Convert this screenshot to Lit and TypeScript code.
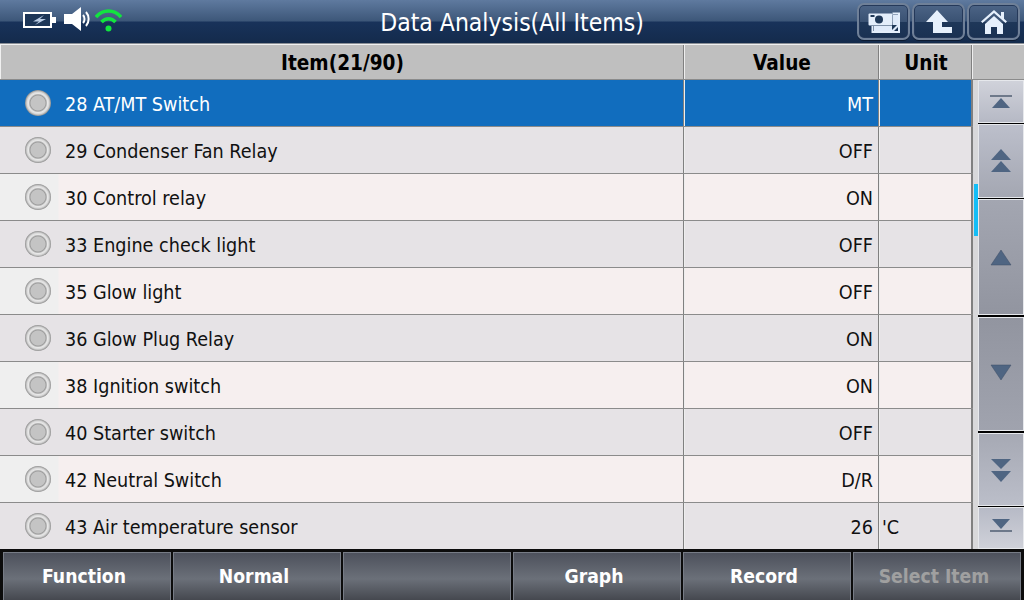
import { LitElement, html, css, svg } from "lit";
import { customElement } from "lit/decorators.js";

const rows: [string, string, string][] = [
  ["28 AT/MT Switch", "MT", ""],
  ["29 Condenser Fan Relay", "OFF", ""],
  ["30 Control relay", "ON", ""],
  ["33 Engine check light", "OFF", ""],
  ["35 Glow light", "OFF", ""],
  ["36 Glow Plug Relay", "ON", ""],
  ["38 Ignition switch", "ON", ""],
  ["40 Starter switch", "OFF", ""],
  ["42 Neutral Switch", "D/R", ""],
  ["43 Air temperature sensor", "26", "'C"],
];

const up = (y: number) => svg`<polygon points="10,${y} 20,${y - 15} 30,${y}" fill="#4f6582" stroke="#3e4f66" stroke-width=".5"/>`;
const down = (y: number) => svg`<polygon points="10,${y} 30,${y} 20,${y + 15}" fill="#4f6582" stroke="#3e4f66" stroke-width=".5"/>`;

const scrollBtns = [
  { cls: "b1", icon: svg`<line x1="9" x2="31" y1="9" y2="9" stroke="#33435a" stroke-width="1.2"/><polygon points="11,21 20,11 29,21" fill="#4f6582"/>` },
  { cls: "b2", icon: svg`<polygon points="10,14 20,3 30,14" fill="#4f6582"/><polygon points="10,26 20,15 30,26" fill="#4f6582"/>` },
  { cls: "b3", icon: up(23) },
  { cls: "b4", icon: down(6) },
  { cls: "b5", icon: svg`<polygon points="10,4 30,4 20,14" fill="#4f6582"/><polygon points="10,16 30,16 20,27" fill="#4f6582"/>` },
  { cls: "b6", icon: svg`<polygon points="11,6 29,6 20,16" fill="#4f6582"/><line x1="9" x2="31" y1="18" y2="18" stroke="#33435a" stroke-width="1.2"/>` },
];

@customElement("app-root")
export class AppRoot extends LitElement {
  static styles = css`
    :host { display: block; width: 1024px; height: 600px; overflow: hidden; font-family: "DejaVu Sans", Verdana, sans-serif; font-stretch: condensed; }
    .top { height: 44px; box-sizing: border-box; display: grid; grid-template-columns: 1fr auto; position: relative;
      background: linear-gradient(#5f7a9f 0, #3d5779 21px, #18325a 22px, #142b4c 43px); border-bottom: 1px solid #8a8f96; }
    .status { position: absolute; left: 23px; top: 7px; display: flex; align-items: flex-start; }
    .status svg { display: block; }
    .title { position: absolute; left: 0; width: 1024px; top: 8px; text-align: center; color: #fff; font-size: 24.5px; line-height: 30px; }
    .nav { grid-column: 2; display: flex; gap: 2px; padding: 3px 4px 0 0; }
    .nav-btn { width: 53px; height: 37px; box-sizing: border-box; border: 2px solid #6f8098; border-radius: 7px; display: flex; align-items: center; justify-content: center;
      background: linear-gradient(#4c6486 0, #3a5273 50%, #1e3759 52%, #1a3152 100%); box-shadow: inset 0 0 0 1px #25395a, 0 1px 0 #0c1a30; }
    .main { display: grid; grid-template-columns: 973px 51px; height: 469px; background: #d8d8da; }
    .table { display: flex; flex-direction: column; }
    .row { display: grid; grid-template-columns: 685px 195px 93px; height: 47px; box-sizing: border-box; border-bottom: 1px solid #8b8b8b; font-size: 19.600px; color: #111; }
    .row > div { border-right: 1px solid #eeeeee; box-shadow: inset -1px 0 0 #808080; box-sizing: border-box; display: flex; align-items: center; }
    .row > div:last-child { border-right-color: #808080; }
    .row.odd { background: #e6e3e6; }
    .row.even { background: #f6efef; }
    .row.sel { background: #116dbe; color: #fff; }
    .row.even .item { background: linear-gradient(90deg, #efefef 58px, #f6efef 59px); }
    .row:last-child { height: 46px; border-bottom: 0; }
    .item { padding-left: 25px; gap: 14px; }
    .label { padding-top: 2px; }
    .val { justify-content: flex-end; padding: 2px 6px 0 0; }
    .unit { padding: 2px 0 0 2px; }
    .led { width: 26px; height: 26px; flex: none; box-sizing: border-box; border-radius: 50%;
      background: radial-gradient(circle at 50% 50%, #c4c4c4 0 7px, #9c9c9c 8px, #e8e8e8 9.500px, #d8d8d8 11px, #8e8e8e 13px); }
    .head { display: grid; grid-template-columns: 685px 195px 93px 51px; height: 36px; box-sizing: border-box; background: #bfbfbf; border-top: 1px solid #f0f0f0; border-bottom: 1px solid #8b8b8b; font-size: 20.600px; font-weight: 700; color: #000; }
    .head > div { display: flex; align-items: center; justify-content: center; padding-top: 2px; border-right: 1px solid #eeeeee; box-shadow: inset -1px 0 0 #808080; box-sizing: border-box; }
    .head > div:last-child { border: 0; box-shadow: none; }
    .head .first { border-left: 1px solid #f0f0f0; }
    .side { display: grid; grid-template-columns: 5px 46px; }
    .track { position: relative; }
    .thumb { position: absolute; left: 1px; top: 104px; width: 4px; height: 52px; background: #14bdf6; }
    .btns { display: flex; flex-direction: column; background: #000; }
    .sb { box-sizing: border-box; border: 1px solid #e6e8ec; display: flex; align-items: center; justify-content: center; }
    .sb svg { display: block; }
    .b1 { height: 43px; margin-bottom: 1px; background: linear-gradient(#d0d2da, #b6b9c5); }
    .b2 { height: 74px; margin-bottom: 1px; background: linear-gradient(#bcbfcb, #a4a7b2); }
    .b3 { height: 116px; margin-bottom: 2px; background: linear-gradient(#a3a6b1, #9295a0); }
    .b4 { height: 114px; margin-bottom: 2px; background: linear-gradient(#9295a0, #a0a3ae); }
    .b5 { height: 73px; margin-bottom: 1px; background: linear-gradient(#a6a9b4, #bbbec9); }
    .b6 { height: 42px; background: linear-gradient(#b7bac6, #cfd1d9); }
    .foot { height: 51px; box-sizing: border-box; background: #0c0c0c; display: grid; grid-template-columns: repeat(6, 168px); gap: 2px; padding: 3px 3px 0 3px; }
    .fb { box-sizing: border-box; display: flex; align-items: center; justify-content: center; padding: 0 6px 1px 0; color: #fff; font-weight: 700; font-size: 19.200px;
      border: 1px solid #777c86; border-bottom: 0; background: linear-gradient(#4d515c, #6b7079 55%, #45484f 100%); }
    .fb.dis { color: #a0a0a0; }
  `;

  render() {
    return html`
      <div class="top">
        <div class="status">
          <svg width="34" height="24" viewBox="0 0 34 24" style="margin-right:7px"><rect x="0" y="5" width="29" height="16" fill="#fff"/><rect x="2" y="7" width="25" height="12" fill="#1c3557"/><rect x="29" y="10" width="4" height="6" fill="#fff"/><path d="M21 8 10 14.500h6l-4 3.500 11-6h-6z" fill="#b9cbe4"/></svg>
          <svg width="27" height="24" viewBox="0 0 27 24" style="margin-right:4px"><path d="M0 7h8l9-7v24l-9-7H0z" fill="#fff"/><path d="M19 8c2 2 2 6 0 8M22 5c3.500 4 3.500 10 0 14" fill="none" stroke="#fff" stroke-width="2"/></svg>
          <svg width="27" height="25" viewBox="0 0 27 25"><path d="M1 10c7-8 18-8 25 0" fill="none" stroke="#12e43f" stroke-width="3.500"/><path d="M6.500 15c4-4.500 10-4.500 14 0" fill="none" stroke="#12e43f" stroke-width="3.500"/><circle cx="13.500" cy="21.500" r="3" fill="#12e43f"/></svg>
        </div>
        <div class="title">Data Analysis(All Items)</div>
        <div class="nav">
          <div class="nav-btn"><svg width="34" height="26" viewBox="0 0 34 26"><path d="M25.500 4.500H32V23H5.500v-6" fill="none" stroke="#e4eefb" stroke-width="2"/><path d="M26 6h5v12l-4 4H7v-5h19z" fill="#dfeafa"/><rect x="1.500" y="4.500" width="24" height="12" rx="1" fill="#e4eefb"/><circle cx="12" cy="10.500" r="4" fill="#1f3858"/><rect x="3.500" y="6" width="4" height="2" fill="#1f3858"/><path d="M25 21l5-5h-5z" fill="#1f3858"/></svg></div>
          <div class="nav-btn"><svg width="28" height="25" viewBox="0 0 28 25"><path d="M12 1 1 13H8V24H27V18H17V13H23Z" fill="#e6f0fc"/></svg></div>
          <div class="nav-btn"><svg width="26" height="26" viewBox="0 0 26 26"><path d="M13 1 0 12.500l1.500 1.500L13 4l11.500 10 1.500-1.500-3-2.700V3h-3v4.200z" fill="#e6f0fc"/><path d="M4 15 13 7l9 8v10h-6v-7h-6v7H4z" fill="#e6f0fc"/></svg></div>
        </div>
      </div>
      <div class="head"><div class="first">Item(21/90)</div><div>Value</div><div>Unit</div><div></div></div>
      <div class="main">
        <div class="table">
          ${rows.map(
            (r, i) => html`<div class="row ${i === 0 ? "sel" : i % 2 ? "odd" : "even"}">
              <div class="item"><span class="led"></span><span class="label">${r[0]}</span></div>
              <div class="val">${r[1]}</div>
              <div class="unit">${r[2]}</div>
            </div>`
          )}
        </div>
        <div class="side">
          <div class="track"><div class="thumb"></div></div>
          <div class="btns">
            ${scrollBtns.map((b) => html`<div class="sb ${b.cls}"><svg width="40" height="30" viewBox="0 0 40 30">${b.icon}</svg></div>`)}
          </div>
        </div>
      </div>
      <div class="foot">
        ${["Function", "Normal", "", "Graph", "Record", "Select Item"].map(
          (t, i) => html`<div class="fb ${i === 5 ? "dis" : ""}">${t}</div>`
        )}
      </div>
    `;
  }
}
